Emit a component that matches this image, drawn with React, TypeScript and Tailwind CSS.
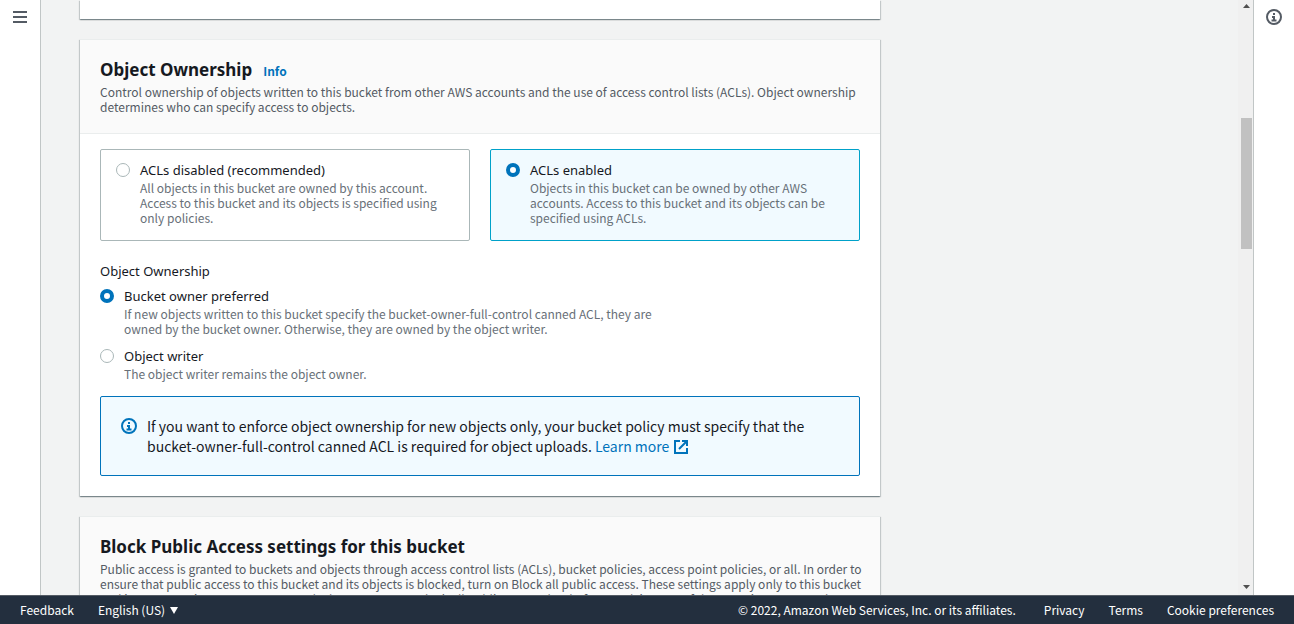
import { useState } from "react";
import type { ReactNode } from "react";

const cardShadow =
  "shadow-[0_1px_1px_0_rgba(0,28,36,0.3),1px_1px_1px_0_rgba(0,28,36,0.15),-1px_1px_1px_0_rgba(0,28,36,0.15)]";

function InfoIcon({ className }: { className: string }) {
  return (
    <svg viewBox="0 0 16 16" className={className} fill="none" stroke="currentColor" strokeWidth="2" aria-hidden="true">
      <circle cx="8" cy="8" r="7" />
      <path d="M8 11V8H6M5.5 11.5h5M8 4v2" />
    </svg>
  );
}

function ExternalIcon() {
  return (
    <svg viewBox="0 0 16 16" className="ml-px inline-block size-4 align-[-3px]" fill="none" stroke="currentColor" strokeWidth="2" aria-hidden="true">
      <path d="M9 2h5v5M6 10l8-8" />
      <path d="M14 9v5H2V2h5" />
    </svg>
  );
}

function Card({ title, info, description, children }: { title: string; info?: boolean; description: string; children?: ReactNode }) {
  return (
    <section className={`border-t border-[#eaeded] bg-white ${cardShadow}`}>
      <header className="border-b border-[#eaeded] bg-[#fafafa] py-[19px] pr-3 pl-5">
        <div className="flex items-baseline gap-[11px]">
          <h2 className="font-['Noto_Sans',sans-serif] text-[17px] leading-[22px] font-bold">{title}</h2>
          {info && (
            <a href="#info" className="text-[12px] leading-[15px] font-bold text-[#0073bb]">
              Info
            </a>
          )}
        </div>
        <p className="mt-[3px] text-[12px] leading-[15px] text-[#545b64]">{description}</p>
      </header>
      {children}
    </section>
  );
}

interface OptionProps {
  name: string;
  label: string;
  description: string;
  checked: boolean;
  onSelect: () => void;
  tile?: boolean;
}

function Option({ name, label, description, checked, onSelect, tile }: OptionProps) {
  const frame = tile
    ? checked
      ? "flex-1 gap-[10px] rounded-[2px] border border-[#00a1c9] bg-[#f1faff] px-[15px] pt-[10px] pb-[15px]"
      : "flex-1 gap-[10px] rounded-[2px] border border-[#aab7b8] bg-white px-[15px] pt-[10px] pb-[15px]"
    : "max-w-[560px] gap-[10px]";
  return (
    <label className={`flex items-start ${frame}`}>
      <input
        type="radio"
        name={name}
        checked={checked}
        onChange={onSelect}
        className="mt-[3px] size-[14px] shrink-0 appearance-none rounded-full border border-[#aab7b8] bg-white checked:border-4 checked:border-[#0073bb]"
      />
      <span className="block">
        <span className="block font-['Noto_Sans',sans-serif] text-[13px] leading-5">{label}</span>
        <span className="block text-[12px] leading-[15px] text-[#687078]">{description}</span>
      </span>
    </label>
  );
}

export default function App() {
  const [acl, setAcl] = useState("enabled");
  const [owner, setOwner] = useState("bucket");

  return (
    <div className="flex h-screen flex-col overflow-hidden font-['Noto_Sans_CJK_SC',sans-serif] text-[14px] leading-5 text-[#16191f]">
      <div className="flex min-h-0 flex-1">
        <nav className="w-[41px] shrink-0 border-r border-[#c1c6c6] bg-white">
          <button type="button" aria-label="Open navigation" className="block px-[13px] py-[10px] text-[#545b64]">
            <svg viewBox="0 0 14 14" className="block size-[14px]" fill="none" stroke="currentColor" strokeWidth="2" aria-hidden="true">
              <path d="M0 2h14M0 7h14M0 12h14" />
            </svg>
          </button>
        </nav>

        <main className="min-w-0 flex-1 overflow-hidden bg-[#f2f3f3] px-[39px]">
          <div className="flex max-w-[800px] flex-col gap-5">
            <section className={`h-[19px] shrink-0 bg-white ${cardShadow}`} />

            <Card
              title="Object Ownership"
              info
              description="Control ownership of objects written to this bucket from other AWS accounts and the use of access control lists (ACLs). Object ownership determines who can specify access to objects."
            >
              <div className="px-5 pt-[15px] pb-5">
                <div className="flex gap-5">
                  <Option
                    tile
                    name="acl"
                    label="ACLs disabled (recommended)"
                    description="All objects in this bucket are owned by this account. Access to this bucket and its objects is specified using only policies."
                    checked={acl === "disabled"}
                    onSelect={() => setAcl("disabled")}
                  />
                  <Option
                    tile
                    name="acl"
                    label="ACLs enabled"
                    description="Objects in this bucket can be owned by other AWS accounts. Access to this bucket and its objects can be specified using ACLs."
                    checked={acl === "enabled"}
                    onSelect={() => setAcl("enabled")}
                  />
                </div>

                <fieldset className="mt-5">
                  <legend className="font-['Noto_Sans',sans-serif] text-[13px]">Object Ownership</legend>
                  <div className="mt-[5px] flex flex-col gap-[10px]">
                    <Option
                      name="owner"
                      label="Bucket owner preferred"
                      description="If new objects written to this bucket specify the bucket-owner-full-control canned ACL, they are owned by the bucket owner. Otherwise, they are owned by the object writer."
                      checked={owner === "bucket"}
                      onSelect={() => setOwner("bucket")}
                    />
                    <Option
                      name="owner"
                      label="Object writer"
                      description="The object writer remains the object owner."
                      checked={owner === "writer"}
                      onSelect={() => setOwner("writer")}
                    />
                  </div>
                </fieldset>

                <div className="mt-[15px] flex items-start gap-[10px] rounded-[2px] border border-[#0073bb] bg-[#f1faff] px-5 py-[19px]">
                  <InfoIcon className="mt-[2px] size-4 shrink-0 text-[#0073bb]" />
                  <p className="max-w-[670px]">
                    If you want to enforce object ownership for new objects only, your bucket policy must specify that the
                    bucket-owner-full-control canned ACL is required for object uploads.{" "}
                    <a href="#learn-more" className="whitespace-nowrap text-[#0073bb]">
                      Learn more <ExternalIcon />
                    </a>
                  </p>
                </div>
              </div>
            </Card>

            <Card
              title="Block Public Access settings for this bucket"
              description="Public access is granted to buckets and objects through access control lists (ACLs), bucket policies, access point policies, or all. In order to ensure that public access to this bucket and its objects is blocked, turn on Block all public access. These settings apply only to this bucket and its access points. AWS recommends that you turn on Block all public access, but before applying any of these settings, ensure that your applications will work correctly without public access."
            />
          </div>
        </main>

        <div className="flex w-[15px] shrink-0 flex-col bg-[#f0f0f0] pt-1 pb-[6px] pl-[3px] text-[#505050]" aria-hidden="true">
          <svg viewBox="0 0 7 4" className="ml-[2px] h-1 w-[7px]" fill="currentColor">
            <path d="M3.5 0L7 4H0z" />
          </svg>
          <div className="flex flex-1 flex-col">
            <div className="grow-[110]" />
            <div className="mr-px grow-[131] bg-[#c1c1c1]" />
            <div className="grow-[335]" />
          </div>
          <svg viewBox="0 0 7 4" className="ml-[2px] h-1 w-[7px]" fill="currentColor">
            <path d="M0 0h7L3.5 4z" />
          </svg>
        </div>

        <aside className="w-[41px] shrink-0 border-l border-[#c1c6c6] bg-white">
          <button type="button" aria-label="Open help panel" className="block px-3 py-[9px] text-[#545b64]">
            <InfoIcon className="block size-4" />
          </button>
        </aside>
      </div>

      <footer className="flex shrink-0 items-center justify-between border-t border-[#545b64] bg-[#232f3e] px-5 py-1 text-[12px] leading-5 text-white">
        <div className="flex gap-6">
          <a href="#feedback">Feedback</a>
          <button type="button" className="flex items-center gap-[5px]">
            English (US)
            <svg viewBox="0 0 8 7" className="h-[7px] w-2" fill="currentColor" aria-hidden="true">
              <path d="M0 0h8L4 7z" />
            </svg>
          </button>
        </div>
        <div className="flex">
          <span className="mr-7">© 2022, Amazon Web Services, Inc. or its affiliates.</span>
          <div className="flex gap-6">
            <a href="#privacy">Privacy</a>
            <a href="#terms">Terms</a>
            <a href="#cookies">Cookie preferences</a>
          </div>
        </div>
      </footer>
    </div>
  );
}
